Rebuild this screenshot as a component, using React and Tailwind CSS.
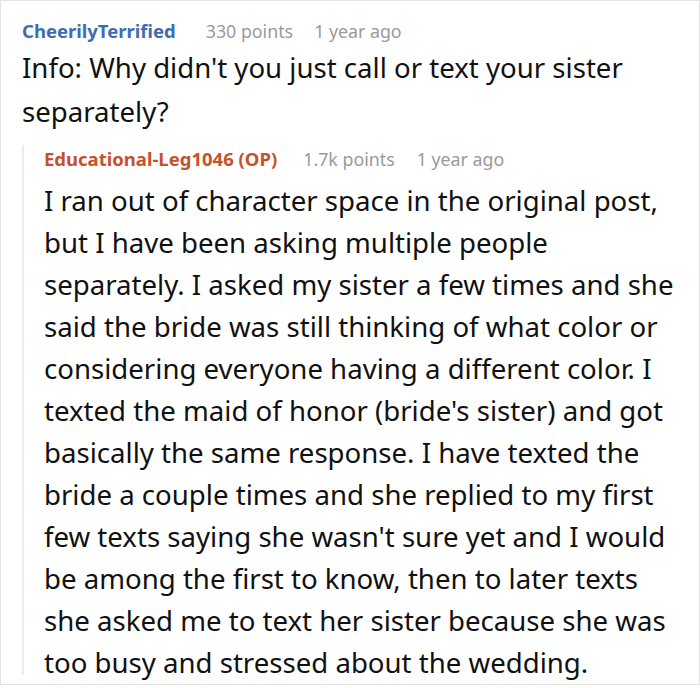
export default function App() {
  const font = { fontFamily: '"Noto Sans", sans-serif' };
  return (
    <div className="w-[700px] h-[688px] bg-white" style={font}>
      <div className="w-[700px] h-[685px] border border-[#e3e3e3] pl-[21px] pt-[16px] overflow-hidden">
        <div className="flex items-baseline leading-[28px]">
          <span className="font-bold text-[18.5px] text-[#3d6db1]">CheerilyTerrified</span>
          <span className="ml-[30px] text-[17.8px] text-[#9a9a9a]">330 points</span>
          <span className="ml-[21px] text-[17.8px] text-[#9a9a9a]">1 year ago</span>
        </div>
        <p className="text-[27.6px] leading-[44px] text-[#111] pr-[11px]">
          Info: Why didn't you just call or text your sister separately?
        </p>
        <div className="mt-[12px] h-[530px] border-l-2 border-[#ececec] pl-[20px]">
          <div className="flex items-baseline leading-[28px]">
            <span className="font-bold text-[18.5px] text-[#c5522b]">Educational-Leg1046 (OP)</span>
            <span className="ml-[26px] text-[17.8px] text-[#9a9a9a]">1.7k points</span>
            <span className="ml-[22px] text-[17.8px] text-[#9a9a9a]">1 year ago</span>
          </div>
          <p className="mt-[6px] text-[27.6px] leading-[42px] text-[#111] pr-[11px]">
            I ran out of character space in the original post, but I have been asking multiple people separately. I asked my sister a few times and she said the bride was still thinking of what color or considering everyone having a different color. I texted the maid of honor (bride's sister) and got basically the same response. I have texted the bride a couple times and she replied to my first few texts saying she wasn't sure yet and I would be among the first to know, then to later texts she asked me to text her sister because she was too busy and stressed about the wedding.
          </p>
        </div>
      </div>
    </div>
  );
}
